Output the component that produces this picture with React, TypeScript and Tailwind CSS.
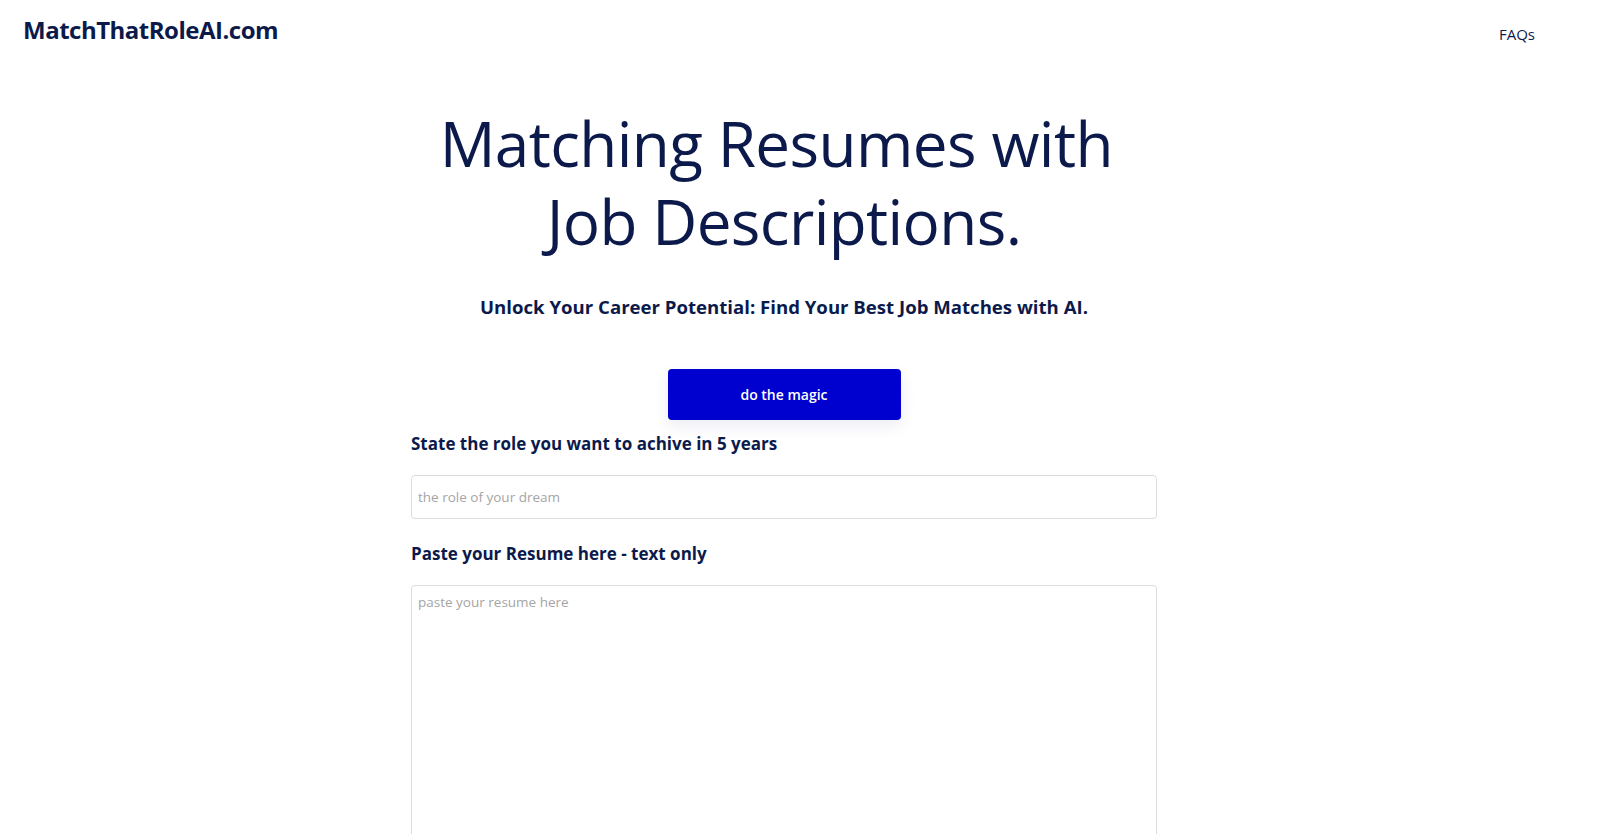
import React from "react";

const App: React.FC = () => {
  const [role, setRole] = React.useState("");
  const [resume, setResume] = React.useState("");

  return (
    <div
      className="h-screen w-full overflow-hidden bg-white pr-[32px] text-[#0c1a4b]"
      style={{ fontFamily: '"Open Sans", "Noto Sans", sans-serif' }}
    >
      {/* header */}
      <header className="flex items-start justify-between pl-[23px] pr-[33px] pt-[13px]">
        <a href="#" className="text-[24px] font-bold leading-[34px] tracking-[-0.5px]">
          MatchThatRoleAI.com
        </a>
        <a href="#" className="mt-[10px] text-[15px] leading-[22px]">
          FAQs
        </a>
      </header>

      <main className="mx-auto flex w-[746px] flex-col items-center">
        <h1 className="mt-[57px] w-[760px] text-center text-[62px] font-normal leading-[78px] tracking-[-0.6px]">
          Matching Resumes with{"\u00a0"}
          <br />
          Job Descriptions.
        </h1>

        <p className="mt-[34px] text-center text-[18.6px] font-bold leading-[26px]">
          Unlock Your Career Potential: Find Your Best Job Matches with AI.
        </p>

        <button
          type="button"
          className="mt-[49px] h-[51px] w-[233px] rounded-[4px] bg-[#0000cf] text-[14px] font-semibold text-white shadow-[0_6px_16px_rgba(0,0,120,0.08)]"
        >
          do the magic
        </button>

        <div className="mt-[12px] w-full">
          <label className="block text-[17px] font-bold leading-[24px]">
            State the role you want to achive in 5 years
          </label>
          <input
            value={role}
            onChange={(e) => setRole(e.target.value)}
            placeholder="the role of your dream"
            className="mt-[19px] h-[44px] w-full rounded-[4px] border border-[#dcdcdc] px-[6px] text-[13.5px] text-[#0c1a4b] outline-none placeholder:text-[#a5a5a5]"
          />

          <label className="mt-[23px] block text-[17px] font-bold leading-[24px]">
            Paste your Resume here - text only
          </label>
          <textarea
            value={resume}
            onChange={(e) => setResume(e.target.value)}
            placeholder="paste your resume here"
            className="mt-[19px] block h-[300px] w-full resize-none rounded-[4px] border border-[#dcdcdc] px-[6px] py-[6px] text-[13.5px] leading-[20px] text-[#0c1a4b] outline-none placeholder:text-[#a5a5a5]"
          />
        </div>
      </main>
    </div>
  );
};

export default App;
